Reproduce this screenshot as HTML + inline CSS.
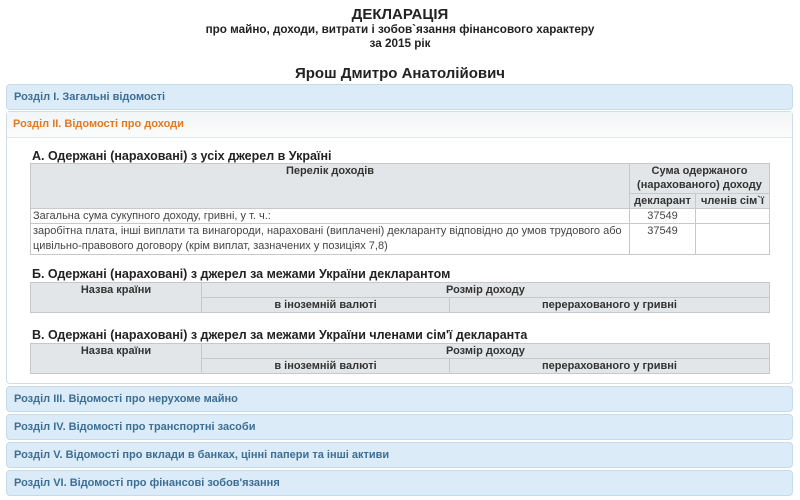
<!DOCTYPE html>
<html><head><meta charset="utf-8"><style>
body{margin:0;width:800px;height:500px;background:#fff;font-family:"Liberation Sans",Arial,sans-serif;position:relative;overflow:hidden;color:#222}
.a{position:absolute}
.c{text-align:center;left:0;width:800px}
.hd{position:absolute;left:6px;width:785px;height:24px;border:1px solid #c5dbe9;border-radius:4px;background:#dcebf8;color:#3d6e93;font-size:11px;font-weight:bold;line-height:24px;box-sizing:content-box}
.hd span{padding-left:7px}
table{position:absolute;border-collapse:collapse;font-size:11px}
td{border:1px solid #c8c8c8;padding:0 2px;line-height:14px;vertical-align:top;color:#444;font-size:11px}
th{border:1px solid #c8c8c8;background:#e3e6e8;font-weight:bold;color:#333;line-height:14px;font-size:11px;vertical-align:top;padding:0 2px}
h3{position:absolute;margin:0;font-size:12.5px;font-weight:bold;color:#222;left:32px}
</style></head><body>
<div class="a c" style="top:6px;font-size:15px;font-weight:bold">ДЕКЛАРАЦІЯ</div>
<div class="a c" style="top:23px;font-size:11.7px;font-weight:bold">про майно, доходи, витрати і зобов`язання фінансового характеру</div>
<div class="a c" style="top:37px;font-size:11.7px;font-weight:bold">за 2015 рік</div>
<div class="a c" style="top:65px;font-size:15px;font-weight:bold">Ярош Дмитро Анатолійович</div>

<div class="hd" style="top:84px"><span>Розділ I. Загальні відомості</span></div>

<div class="a" style="left:6px;top:111px;width:785px;height:271px;border:1px solid #d2dde2;border-radius:4px"></div>
<div class="a" style="left:7px;top:112px;width:785px;height:25px;background:linear-gradient(#f2f5f6,#fbfcfc);border-bottom:1px solid #e4eaec;color:#e07a22;font-size:11px;font-weight:bold;line-height:25px"><span style="padding-left:6px">Розділ II. Відомості про доходи</span></div>

<h3 style="top:149px">А. Одержані (нараховані) з усіх джерел в Україні</h3>
<table style="left:30px;top:163px;width:740px">
<tr style="height:30px"><th rowspan="2" style="width:594px">Перелік доходів</th><th colspan="2">Сума одержаного<br>(нарахованого) доходу</th></tr>
<tr style="height:15px"><th style="width:61px">декларант</th><th>членів сім`ї</th></tr>
<tr style="height:14px"><td>Загальна сума сукупного доходу, гривні, у т. ч.:</td><td style="text-align:center">37549</td><td></td></tr>
<tr style="height:30px"><td style="line-height:15px">заробітна плата, інші виплати та винагороди, нараховані (виплачені) декларанту відповідно до умов трудового або цивільно-правового договору (крім виплат, зазначених у позиціях 7,8)</td><td style="text-align:center">37549</td><td></td></tr>
</table>

<h3 style="top:267px">Б. Одержані (нараховані) з джерел за межами України декларантом</h3>
<table style="left:30px;top:282px;width:740px">
<tr style="height:15px"><th rowspan="2" style="width:166px">Назва країни</th><th colspan="2">Розмір доходу</th></tr>
<tr style="height:15px"><th style="width:243px">в іноземній валюті</th><th>перерахованого у гривні</th></tr>
</table>

<h3 style="top:328px">В. Одержані (нараховані) з джерел за межами України членами сім'ї декларанта</h3>
<table style="left:30px;top:343px;width:740px">
<tr style="height:15px"><th rowspan="2" style="width:166px">Назва країни</th><th colspan="2">Розмір доходу</th></tr>
<tr style="height:15px"><th style="width:243px">в іноземній валюті</th><th>перерахованого у гривні</th></tr>
</table>

<div class="hd" style="top:386px"><span>Розділ III. Відомості про нерухоме майно</span></div>
<div class="hd" style="top:414px"><span>Розділ IV. Відомості про транспортні засоби</span></div>
<div class="hd" style="top:442px"><span>Розділ V. Відомості про вклади в банках, цінні папери та інші активи</span></div>
<div class="hd" style="top:470px"><span>Розділ VI. Відомості про фінансові зобов'язання</span></div>
</body></html>
